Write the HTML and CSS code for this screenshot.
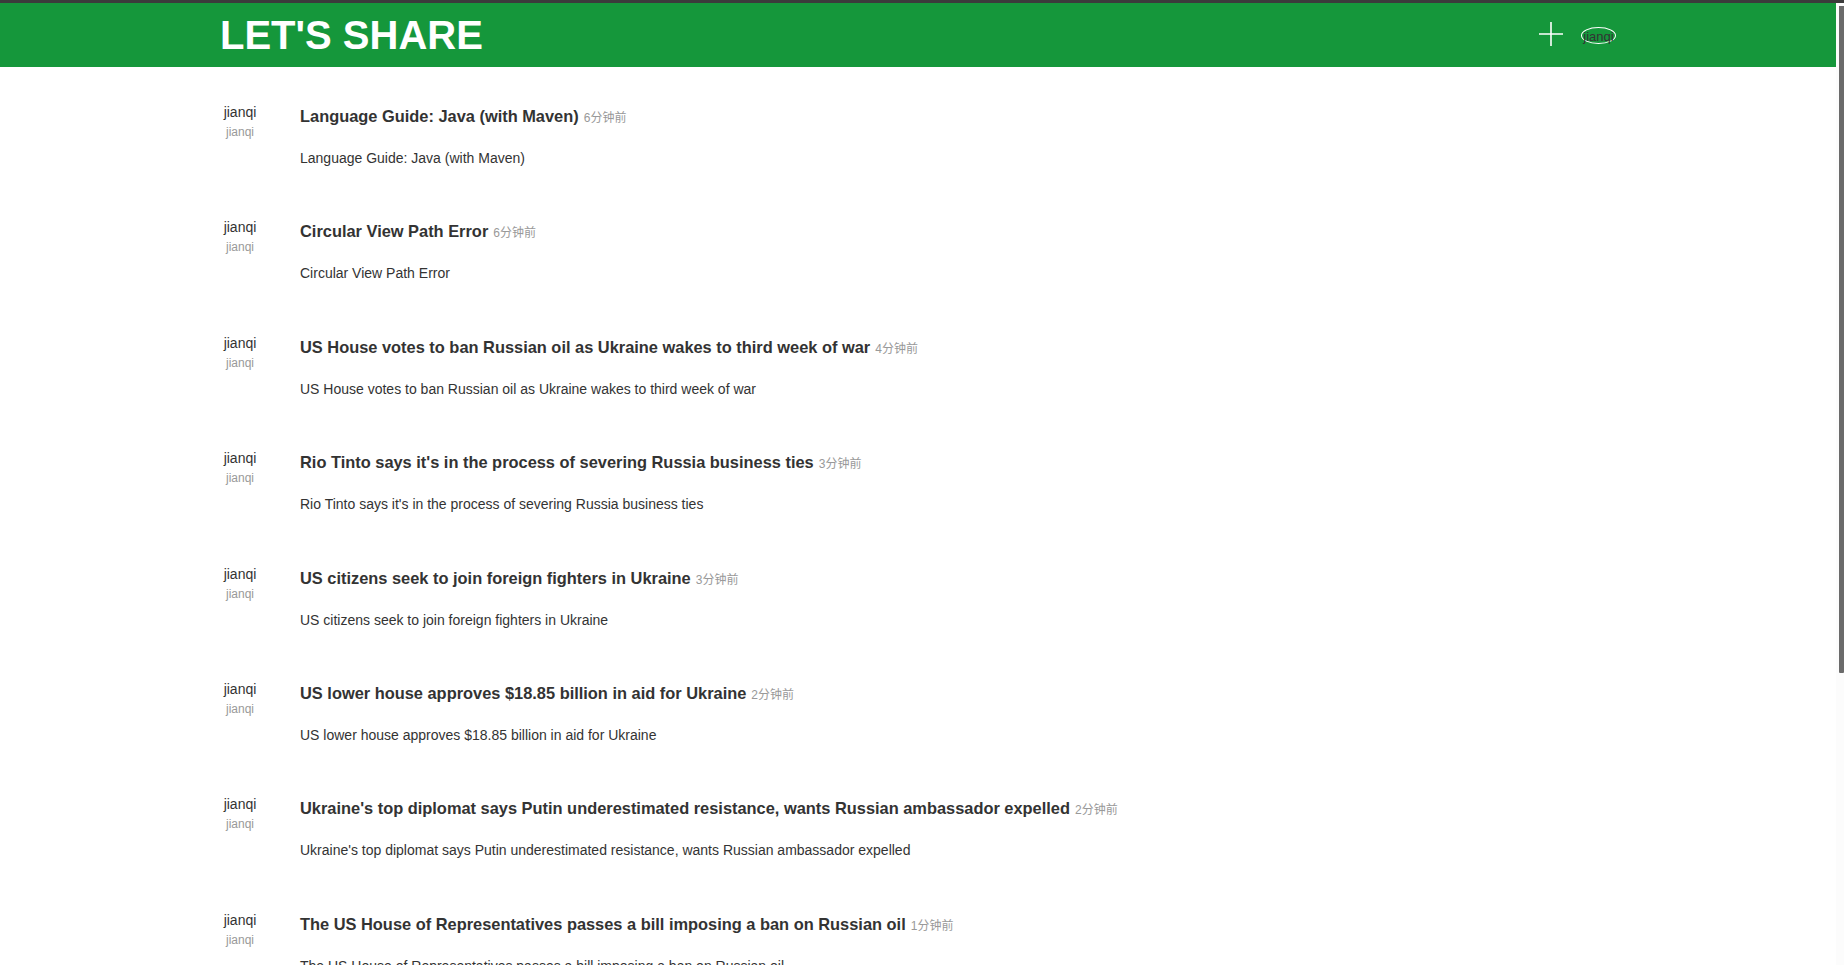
FILE: index.html
```html
<!DOCTYPE html>
<html lang="zh">
<head>
<meta charset="utf-8">
<title>LET'S SHARE</title>
<link rel="stylesheet" href="styles.css">
</head>
<body>
<div class="topline"></div>
<div class="viewport">
  <div class="page">
    <header class="navbar">
      <div class="container nav-inner">
        <h1 class="brand">LET'S SHARE</h1>
        <div class="nav-actions">
          <svg class="plus" width="24" height="24" viewBox="0 0 24 24"><path d="M0 12H24M12 0V24" stroke="#fff" stroke-width="1.6" fill="none"/></svg>
          <span class="avatar">jianqi</span>
        </div>
      </div>
    </header>
    <main class="container posts">
      <article class="post">
        <div class="author"><div class="author-name">jianqi</div><div class="author-sub">jianqi</div></div>
        <div class="post-body"><h4 class="post-title">Language Guide: Java (with Maven)<span class="post-time">6分钟前</span></h4><p class="post-desc">Language Guide: Java (with Maven)</p></div>
      </article>
      <article class="post">
        <div class="author"><div class="author-name">jianqi</div><div class="author-sub">jianqi</div></div>
        <div class="post-body"><h4 class="post-title">Circular View Path Error<span class="post-time">6分钟前</span></h4><p class="post-desc">Circular View Path Error</p></div>
      </article>
      <article class="post">
        <div class="author"><div class="author-name">jianqi</div><div class="author-sub">jianqi</div></div>
        <div class="post-body"><h4 class="post-title">US House votes to ban Russian oil as Ukraine wakes to third week of war<span class="post-time">4分钟前</span></h4><p class="post-desc">US House votes to ban Russian oil as Ukraine wakes to third week of war</p></div>
      </article>
      <article class="post">
        <div class="author"><div class="author-name">jianqi</div><div class="author-sub">jianqi</div></div>
        <div class="post-body"><h4 class="post-title">Rio Tinto says it's in the process of severing Russia business ties<span class="post-time">3分钟前</span></h4><p class="post-desc">Rio Tinto says it's in the process of severing Russia business ties</p></div>
      </article>
      <article class="post">
        <div class="author"><div class="author-name">jianqi</div><div class="author-sub">jianqi</div></div>
        <div class="post-body"><h4 class="post-title">US citizens seek to join foreign fighters in Ukraine<span class="post-time">3分钟前</span></h4><p class="post-desc">US citizens seek to join foreign fighters in Ukraine</p></div>
      </article>
      <article class="post">
        <div class="author"><div class="author-name">jianqi</div><div class="author-sub">jianqi</div></div>
        <div class="post-body"><h4 class="post-title">US lower house approves $18.85 billion in aid for Ukraine<span class="post-time">2分钟前</span></h4><p class="post-desc">US lower house approves $18.85 billion in aid for Ukraine</p></div>
      </article>
      <article class="post">
        <div class="author"><div class="author-name">jianqi</div><div class="author-sub">jianqi</div></div>
        <div class="post-body"><h4 class="post-title">Ukraine's top diplomat says Putin underestimated resistance, wants Russian ambassador expelled<span class="post-time">2分钟前</span></h4><p class="post-desc">Ukraine's top diplomat says Putin underestimated resistance, wants Russian ambassador expelled</p></div>
      </article>
      <article class="post">
        <div class="author"><div class="author-name">jianqi</div><div class="author-sub">jianqi</div></div>
        <div class="post-body"><h4 class="post-title">The US House of Representatives passes a bill imposing a ban on Russian oil<span class="post-time">1分钟前</span></h4><p class="post-desc">The US House of Representatives passes a bill imposing a ban on Russian oil</p></div>
      </article>
    </main>
  </div>
  <div class="scrollbar"><div class="scroll-thumb"></div></div>
</div>
</body>
</html>
```
FILE: styles.css
```css
html, body {
  margin: 0;
  height: 100%;
  overflow: hidden;
}
body {
  font-family: "Liberation Sans", Arial, "Noto Sans CJK SC", sans-serif;
  color: #333;
  background: #fff;
}
.topline {
  height: 3px;
  background: #3b3b3b;
}
.viewport {
  display: flex;
  height: calc(100vh - 3px);
}
.page {
  flex: 1;
  min-width: 0;
  overflow: hidden;
  background: #fff;
}
.scrollbar {
  box-sizing: border-box;
  width: 8px;
  padding: 3px 0 0 3px;
  background: #fcfcfc;
}
.scroll-thumb {
  height: 667px;
  background: #6b6b6b;
  border-radius: 0 0 1px 1px;
}
.container {
  width: 1396px;
  margin: 0 auto;
}
.navbar {
  background: #15973b;
  height: 64px;
}
.nav-inner {
  display: flex;
  align-items: center;
  justify-content: space-between;
  height: 100%;
}
.brand {
  margin: 0;
  font-size: 40px;
  font-weight: bold;
  line-height: 64px;
  color: #fff;
}
.nav-actions {
  display: flex;
  align-items: center;
  gap: 18px;
}
.plus {
  display: block;
  margin-bottom: 2px;
}
.avatar {
  display: block;
  width: 33px;
  height: 15px;
  border: 1px solid #fff;
  border-radius: 50%;
  font-size: 13px;
  line-height: 17px;
  color: #333;
  text-align: center;
  white-space: nowrap;
}
.posts {
  padding-top: 11px;
}
.post {
  display: flex;
  padding: 26px 0 25.4px;
}
.author {
  flex-shrink: 0;
  width: 40px;
  margin-right: 40px;
  text-align: center;
}
.author-name {
  font-size: 14px;
  line-height: 17px;
}
.author-sub {
  font-size: 12px;
  line-height: 23px;
  color: #999;
}
.post-title {
  margin: 0;
  font-size: 16.4px;
  line-height: 24px;
  font-weight: bold;
}
.post-time {
  margin-left: 5px;
  font-size: 12px;
  line-height: 1;
  font-weight: normal;
  color: #999;
}
.post-desc {
  margin: 20px 0 0;
  font-size: 14px;
  line-height: 20px;
}
```
